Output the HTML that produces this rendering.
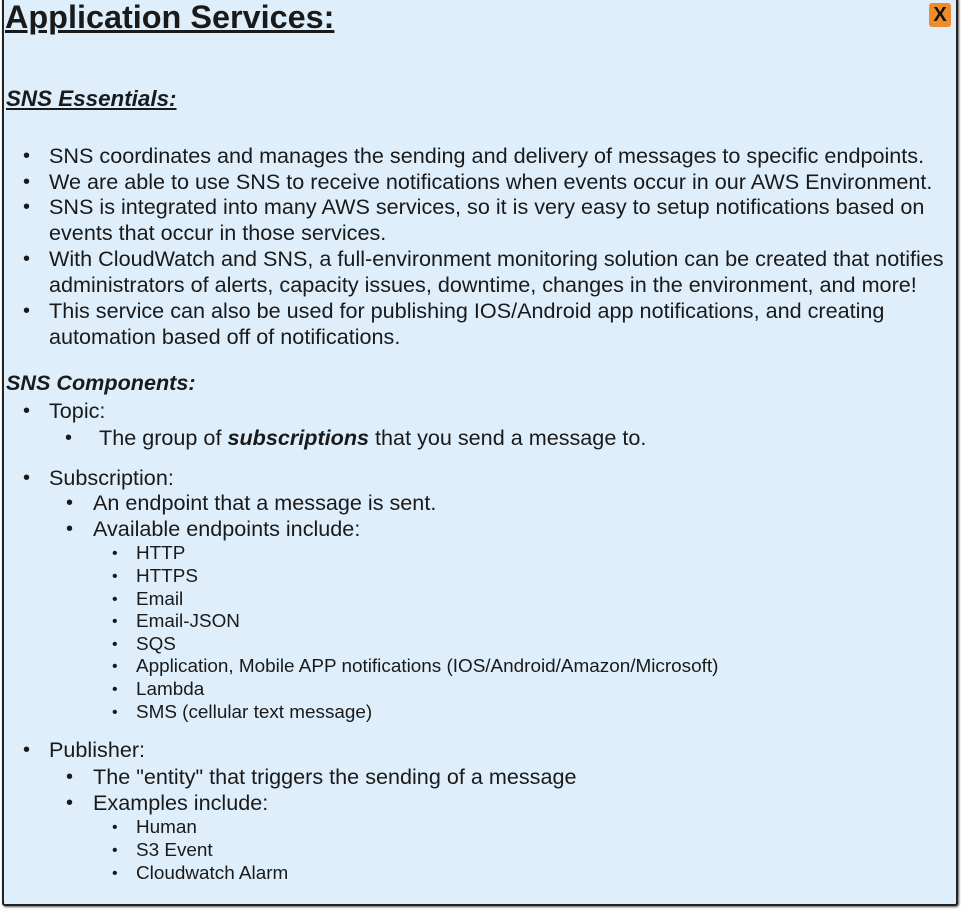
<!DOCTYPE html>
<html><head><meta charset="utf-8"><style>
body{margin:0;width:961px;height:912px;background:#fff;position:relative;overflow:hidden;font-family:"Liberation Sans",Arial,sans-serif;color:#1a1a1a}
.box{position:absolute;left:2px;top:-3px;width:952px;height:905px;background:#deeefa;border:2px solid #222;border-radius:3px;box-shadow:1px 1px 2px #555}
.t{position:absolute;white-space:nowrap;line-height:24px}
.l1{font-size:21.6px}
.l3{font-size:18.9px;line-height:22px}
.b{position:absolute;font-size:20px;line-height:24px}
.b3{position:absolute;font-size:16px;line-height:22px}
.x{position:absolute;left:929px;top:3px;width:22px;height:24px;background:#ee8b2a;border-radius:3px;font:bold 20px "Liberation Sans",sans-serif;text-align:center;line-height:24px;color:#111}
</style></head><body>
<div class="box"></div>
<div class="t" style="left:5px;top:0px;font-size:32.4px;font-weight:bold;text-decoration:underline;line-height:34px">Application Services:</div>
<div class="x">X</div>
<div class="t" style="left:6px;top:87px;font-size:22.4px;font-weight:bold;font-style:italic;text-decoration:underline">SNS Essentials:</div>
<div class="b" style="left:23px;top:144px">•</div><div class="t l1" style="left:49px;top:144px">SNS coordinates and manages the sending and delivery of messages to specific endpoints.</div>
<div class="b" style="left:23px;top:170px">•</div><div class="t l1" style="left:49px;top:170px">We are able to use SNS to receive notifications when events occur in our AWS Environment.</div>
<div class="b" style="left:23px;top:195px">•</div><div class="t l1" style="left:49px;top:195px">SNS is integrated into many AWS services, so it is very easy to setup notifications based on</div>
<div class="t l1" style="left:49px;top:221px">events that occur in those services.</div>
<div class="b" style="left:23px;top:247px">•</div><div class="t l1" style="left:49px;top:247px">With CloudWatch and SNS, a full-environment monitoring solution can be created that notifies</div>
<div class="t l1" style="left:49px;top:273px">administrators of alerts, capacity issues, downtime, changes in the environment, and more!</div>
<div class="b" style="left:23px;top:299px">•</div><div class="t l1" style="left:49px;top:299px">This service can also be used for publishing IOS/Android app notifications, and creating</div>
<div class="t l1" style="left:49px;top:325px">automation based off of notifications.</div>
<div class="t" style="left:6px;top:371px;font-size:21.6px;font-weight:bold;font-style:italic">SNS Components:</div>
<div class="b" style="left:23px;top:399px">•</div><div class="t l1" style="left:49px;top:399px">Topic:</div>
<div class="b" style="left:65px;top:426px">•</div><div class="t l1" style="left:99px;top:426px">The group of <b><i>subscriptions</i></b> that you send a message to.</div>
<div class="b" style="left:23px;top:466px">•</div><div class="t l1" style="left:49px;top:466px">Subscription:</div>
<div class="b" style="left:66px;top:491px">•</div><div class="t l1" style="left:93px;top:491px">An endpoint that a message is sent.</div>
<div class="b" style="left:66px;top:517px">•</div><div class="t l1" style="left:93px;top:517px">Available endpoints include:</div>
<div class="b3" style="left:112px;top:543px">•</div><div class="t l3" style="left:136px;top:543px">HTTP</div>
<div class="b3" style="left:112px;top:566px">•</div><div class="t l3" style="left:136px;top:566px">HTTPS</div>
<div class="b3" style="left:112px;top:589px">•</div><div class="t l3" style="left:136px;top:589px">Email</div>
<div class="b3" style="left:112px;top:611px">•</div><div class="t l3" style="left:136px;top:611px">Email-JSON</div>
<div class="b3" style="left:112px;top:634px">•</div><div class="t l3" style="left:136px;top:634px">SQS</div>
<div class="b3" style="left:112px;top:656px">•</div><div class="t l3" style="left:136px;top:656px">Application, Mobile APP notifications (IOS/Android/Amazon/Microsoft)</div>
<div class="b3" style="left:112px;top:679px">•</div><div class="t l3" style="left:136px;top:679px">Lambda</div>
<div class="b3" style="left:112px;top:702px">•</div><div class="t l3" style="left:136px;top:702px">SMS (cellular text message)</div>
<div class="b" style="left:23px;top:738px">•</div><div class="t l1" style="left:49px;top:738px">Publisher:</div>
<div class="b" style="left:66px;top:765px">•</div><div class="t l1" style="left:93px;top:765px">The "entity" that triggers the sending of a message</div>
<div class="b" style="left:66px;top:791px">•</div><div class="t l1" style="left:93px;top:791px">Examples include:</div>
<div class="b3" style="left:112px;top:817px">•</div><div class="t l3" style="left:136px;top:817px">Human</div>
<div class="b3" style="left:112px;top:840px">•</div><div class="t l3" style="left:136px;top:840px">S3 Event</div>
<div class="b3" style="left:112px;top:863px">•</div><div class="t l3" style="left:136px;top:863px">Cloudwatch Alarm</div>
</body></html>
